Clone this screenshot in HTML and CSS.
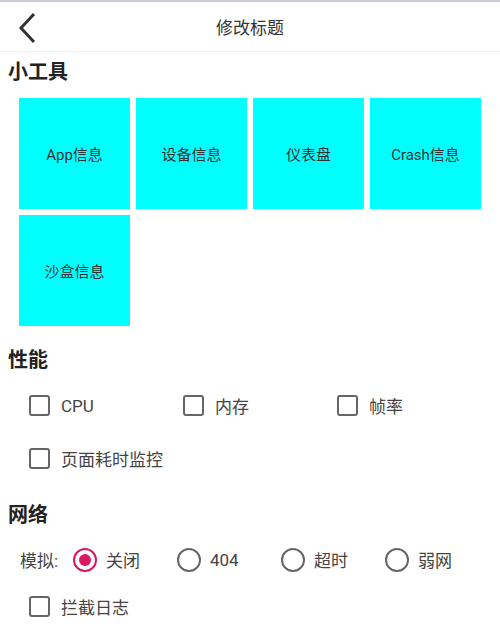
FILE: index.html
```html
<!DOCTYPE html>
<html lang="zh-CN">
<head>
  <meta charset="UTF-8">
  <title>修改标题</title>
  <meta name="viewport" content="width=device-width, initial-scale=1.0">
  <link rel="stylesheet" href="styles.css">
</head>
<body>
  <div class="title-bar">
    <span class="back">
      <svg width="20" height="32" viewBox="0 0 20 32"><polyline points="16,2 3,16 16,30" fill="none" stroke="#333" stroke-width="3"/></svg>
    </span>
    <span class="title">修改标题</span>
  </div>

  <div class="section-title first">小工具</div>
  <div class="tools">
    <div class="tool">App信息</div>
    <div class="tool">设备信息</div>
    <div class="tool">仪表盘</div>
    <div class="tool">Crash信息</div>
    <div class="tool">沙盒信息</div>
  </div>

  <div class="section-title perf">性能</div>
  <div class="check-grid">
    <label class="check"><span class="box"></span>CPU</label>
    <label class="check"><span class="box"></span>内存</label>
    <label class="check"><span class="box"></span>帧率</label>
    <label class="check"><span class="box"></span>页面耗时监控</label>
  </div>

  <div class="section-title net">网络</div>
  <div class="radio-row">
    <span class="radio-label">模拟:</span>
    <label class="radio checked"><span class="circle"></span>关闭</label>
    <label class="radio"><span class="circle"></span>404</label>
    <label class="radio"><span class="circle"></span>超时</label>
    <label class="radio"><span class="circle"></span>弱网</label>
  </div>
  <div class="check-grid single">
    <label class="check"><span class="box"></span>拦截日志</label>
  </div>
</body>
</html>
```

FILE: styles.css
```css
body { margin: 0; font-family: Roboto, "Noto Sans CJK SC", sans-serif; color: #333; background: #fff; border-top: 2px solid #c9ced6; }

.title-bar { height: 49px; border-bottom: 1px solid #f2f2f2; display: flex; align-items: center; justify-content: center; position: relative; }
.back { position: absolute; left: 18px; top: 10px; }
.title { font-size: 17px; color: #333; }

.section-title { padding-left: 8px; font-size: 20px; font-weight: bold; line-height: 24px; color: #222; }
.section-title.first { margin-top: 8px; margin-bottom: 14px; }
.section-title.perf { margin-top: 22px; margin-bottom: 7px; }
.section-title.net { margin-top: 18px; margin-bottom: 9px; }

.tools { display: grid; grid-template-columns: repeat(4, 111px); gap: 6px; padding-left: 19px; }
.tool { height: 111px; background: #00ffff; display: flex; align-items: center; justify-content: center; font-size: 15px; color: #333; }

.check-grid { display: grid; grid-template-columns: repeat(3, 154px); grid-auto-rows: 53px; padding-left: 29px; }
.check-grid.single { grid-auto-rows: 47px; }
.check { display: flex; align-items: center; font-size: 17px; color: #444; }
.box { width: 17px; height: 17px; border: 2px solid #666; border-radius: 3px; margin-right: 11px; }

.radio-row { display: flex; align-items: center; height: 47px; padding-left: 20px; font-size: 17px; color: #444; }
.radio-label { width: 53px; }
.radio { display: flex; align-items: center; width: 104px; }
.circle { width: 20px; height: 20px; border: 2px solid #666; border-radius: 50%; margin-right: 9px; box-sizing: content-box; position: relative; }
.radio.checked .circle { border-color: #d81b60; }
.radio.checked .circle::after { content: ""; position: absolute; left: 4px; top: 4px; width: 12px; height: 12px; border-radius: 50%; background: #d81b60; }
```
